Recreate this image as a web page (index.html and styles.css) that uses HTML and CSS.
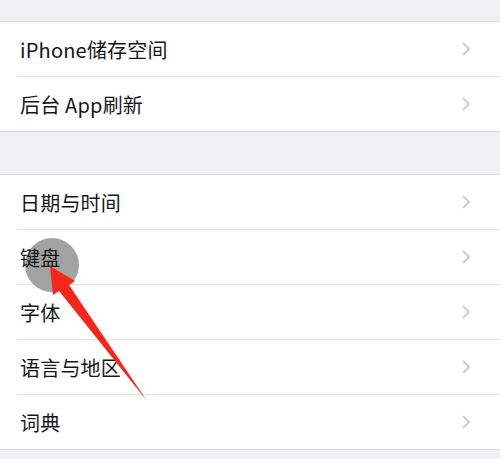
FILE: index.html
```html
<!DOCTYPE html>
<html lang="zh-CN">
<head>
<meta charset="utf-8">
<title>通用</title>
<link rel="stylesheet" href="styles.css">
</head>
<body>
<div class="page">
  <svg class="annot under" width="500" height="459" viewBox="0 0 500 459">
    <circle cx="52" cy="265" r="27" fill="#a2a2a2"/>
  </svg>
  <div class="spacer top"></div>
  <ul class="group">
    <li class="row"><span class="label">iPhone储存空间</span><svg class="chev" viewBox="0 0 8 14"><path d="M1 1l6 6-6 6"/></svg></li>
    <li class="row"><span class="label">后台 App刷新</span><svg class="chev" viewBox="0 0 8 14"><path d="M1 1l6 6-6 6"/></svg></li>
  </ul>
  <div class="spacer mid"></div>
  <ul class="group">
    <li class="row"><span class="label">日期与时间</span><svg class="chev" viewBox="0 0 8 14"><path d="M1 1l6 6-6 6"/></svg></li>
    <li class="row"><span class="label">键盘</span><svg class="chev" viewBox="0 0 8 14"><path d="M1 1l6 6-6 6"/></svg></li>
    <li class="row"><span class="label">字体</span><svg class="chev" viewBox="0 0 8 14"><path d="M1 1l6 6-6 6"/></svg></li>
    <li class="row"><span class="label">语言与地区</span><svg class="chev" viewBox="0 0 8 14"><path d="M1 1l6 6-6 6"/></svg></li>
    <li class="row"><span class="label">词典</span><svg class="chev" viewBox="0 0 8 14"><path d="M1 1l6 6-6 6"/></svg></li>
  </ul>
  <div class="spacer bottom"></div>
  <svg class="annot over" width="500" height="459" viewBox="0 0 500 459">
    <polygon points="50,266 75,281 69,285 147,401 59,291 53,295" fill="#f6261b"/>
  </svg>
</div>
</body>
</html>
```
FILE: styles.css
```css
html, body {
  margin: 0;
  padding: 0;
  background: #efeff4;
}
.page {
  position: relative;
  width: 500px;
  height: 459px;
  overflow: hidden;
  font-family: "Noto Sans CJK SC", "Noto Sans", sans-serif;
}
.spacer.top { height: 21px; }
.spacer.mid { height: 42px; }
.spacer.bottom { height: 10px; }
.group {
  list-style: none;
  margin: 0;
  padding: 0;
  background: #fff;
  border-top: 1px solid #dadade;
  border-bottom: 1px solid #dadade;
}
.row {
  display: flex;
  align-items: center;
  justify-content: space-between;
  height: 54px;
  margin-left: 17px;
  padding-left: 3px;
  padding-right: 30px;
  border-bottom: 1px solid #e2e2e5;
}
.row:last-child { border-bottom: none; }
.label {
  position: relative;
  z-index: 2;
  font-size: 20px;
  color: #161618;
  letter-spacing: 0.2px;
}
.chev {
  width: 8px;
  height: 14px;
  fill: none;
  stroke: #c3c3c8;
  stroke-width: 1.7;
}
.annot {
  position: absolute;
  left: 0;
  top: 0;
  pointer-events: none;
}
.annot.under { z-index: 1; }
.annot.over { z-index: 3; }
```
